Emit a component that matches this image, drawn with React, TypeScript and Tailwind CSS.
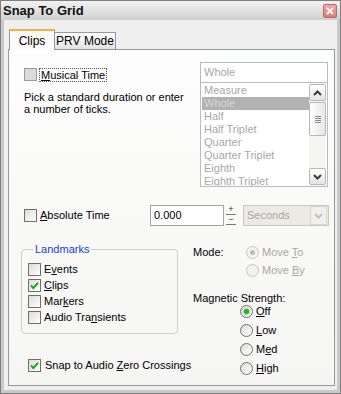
import React from 'react';

function CheckBox({ checked = false, dim = false }: { checked?: boolean; dim?: boolean }) {
  return (
    <span
      className={
        'w-[13px] h-[13px] shrink-0 border flex items-center justify-center ' +
        (dim ? 'border-[#9c9c9c] bg-[#dadada]' : 'border-[#6f6f6f] bg-linear-to-br from-[#dcdcd6] to-white')
      }
    >
      {checked && (
        <svg width="11" height="11" viewBox="0 0 11 11">
          <path d="M2 5.5 L4.4 8 L9 2.8" fill="none" stroke="#21a121" strokeWidth="2" />
        </svg>
      )}
    </span>
  );
}

function Radio({ checked = false, disabled = false }: { checked?: boolean; disabled?: boolean }) {
  return (
    <span
      className={
        'w-[13px] h-[13px] shrink-0 rounded-full border flex items-center justify-center ' +
        (disabled ? 'border-[#c9c7ba] bg-[#f2f2f0]' : 'border-[#6f6f6f] bg-linear-to-br from-[#dcdcd6] to-white')
      }
    >
      {checked && (
        <span
          className={
            'w-[5px] h-[5px] rounded-full ' + (disabled ? 'bg-[#bdbdb5]' : 'bg-[#2cae2c] shadow-[0_0_1px_1px_#9be29b]')
          }
        />
      )}
    </span>
  );
}

const ITEMS = ['Measure', 'Whole', 'Half', 'Half Triplet', 'Quarter', 'Quarter Triplet', 'Eighth', 'Eighth Triplet'];

function ScrollBtn({ up }: { up?: boolean }) {
  return (
    <div className="h-[17px] w-[17px] border border-[#b8b8b8] rounded-[2px] bg-linear-to-b from-white to-[#e4e4e4] flex items-center justify-center">
      <svg width="9" height="6" viewBox="0 0 9 6">
        <path d={up ? 'M1 5 L4.5 1.5 L8 5' : 'M1 1 L4.5 4.5 L8 1'} fill="none" stroke="#3c3c3c" strokeWidth="2" />
      </svg>
    </div>
  );
}

export default function App() {
  return (
    <div
      className="w-[341px] h-[394px] flex flex-col border border-[#7e7e7e] bg-[#e6e6e6] text-[11px] text-black overflow-hidden"
      style={{ fontFamily: '"Liberation Sans", Arial, sans-serif' }}
    >
      {/* title bar */}
      <div className="h-[19px] shrink-0 flex items-center justify-between pl-[2px] pr-[3px] bg-linear-to-b from-[#f2f2f2] to-[#d0d0d0]">
        <span className="font-bold text-[13px] text-[#111]">Snap To Grid</span>
        <span className="w-[14px] h-[14px] rounded-[2px] border border-[#b46b6b] bg-linear-to-b from-[#f4a9a3] to-[#de7a72] flex items-center justify-center">
          <svg width="8" height="8" viewBox="0 0 8 8">
            <path d="M1 1 L7 7 M7 1 L1 7" stroke="white" strokeWidth="2" />
          </svg>
        </span>
      </div>

      {/* body */}
      <div className="flex-1 flex flex-col border-x-[3px] border-b-[3px] border-[#c9c9c9] bg-[#eeeeee] pl-[4px] pr-[2px] pt-[8px] pb-[4px]">
        {/* tabs */}
        <div className="flex items-end pl-[1px] h-[21px] shrink-0">
          <div className="relative z-10 -mb-px w-[46px] h-[21px] bg-[#fbfbfb] border-x border-[#919b9c] border-t-[2px] border-t-[#f0b23a] flex items-center justify-center">
            <span className="text-[12px]">Clips</span>
          </div>
          <div className="w-[61px] h-[17px] border border-l-0 border-b-0 border-[#919b9c] bg-linear-to-b from-white to-[#e2e2e2] flex items-center justify-center">
            <span className="text-[12px]">PRV Mode</span>
          </div>
        </div>

        {/* panel */}
        <div className="flex-1 border border-[#919b9c] bg-linear-to-b from-[#fdfdfd] to-[#f5f5f3] flex flex-col">
          {/* top row */}
          <div className="flex">
            <div className="pl-[15px] pt-[18px]">
              <div className="flex items-center h-[13px]">
                <CheckBox dim />
                <span className="ml-[2px] px-[1px] border border-dotted border-[#555] leading-[12px]">
                  <span className="underline">M</span>usical Time
                </span>
              </div>
              <div className="mt-[10px] leading-[12px] w-[170px]">
                Pick a standard duration or enter
                <br />a number of ticks.
              </div>
            </div>
            <div className="ml-auto mr-[6px] mt-[12px] w-[128px]">
              <div className="h-[21px] border border-[#b9bcbc] bg-white flex items-center pl-[3px] text-[#a7a6aa]">
                Whole
              </div>
              <div className="h-[104px] border border-[#b9bcbc] border-t-0 bg-white flex overflow-hidden">
                <div className="flex-1 pt-[1px] pl-[1px] text-[#a7a6aa]">
                  {ITEMS.map((it, i) => (
                    <div
                      key={it}
                      className={'h-[13px] leading-[13px] pl-[2px] ' + (i === 1 ? 'bg-[#b2b2b2] text-[#d6d6d6]' : '')}
                    >
                      {it}
                    </div>
                  ))}
                </div>
                <div className="w-[17px] mr-[1px] flex flex-col bg-[#f5f5f1] py-[1px]">
                  <ScrollBtn up />
                  <div className="flex-1 pt-[1px]">
                    <div className="h-[34px] border border-[#b8b8b8] rounded-[2px] bg-linear-to-r from-white to-[#e6e6e6] flex flex-col items-center justify-center gap-[1px]">
                      <span className="w-[6px] h-px bg-[#8c8c8c]" />
                      <span className="w-[6px] h-px bg-[#8c8c8c]" />
                      <span className="w-[6px] h-px bg-[#8c8c8c]" />
                      <span className="w-[6px] h-px bg-[#8c8c8c]" />
                    </div>
                  </div>
                  <ScrollBtn />
                </div>
              </div>
            </div>
          </div>

          {/* absolute time row */}
          <div className="mt-[18px] h-[21px] flex items-center pl-[15px]">
            <div className="w-[126px] flex items-center">
              <CheckBox />
              <span className="ml-[3px]">
                <span className="underline">A</span>bsolute Time
              </span>
            </div>
            <div className="w-[74px] h-[21px] border border-[#9da3a6] bg-white flex items-center pl-[3px]">0.000</div>
            <div className="ml-[2px] w-[10px] h-[21px] flex flex-col text-[9px] leading-[9px] text-[#333]">
              <div className="h-[10px] border-b border-[#777] flex items-center justify-center">+</div>
              <div className="h-[10px] border-b border-[#777] flex items-center justify-center">−</div>
            </div>
            <div className="ml-[7px] w-[86px] h-[21px] border border-[#c9c9c2] bg-[#ebebe4] flex items-center">
              <span className="flex-1 pl-[3px] text-[#a7a6aa]">Seconds</span>
              <span className="w-[17px] h-[19px] mr-px border border-[#d8d8d0] bg-[#f0f0ea] flex items-center justify-center">
                <svg width="9" height="6" viewBox="0 0 9 6">
                  <path d="M1 1 L4.5 4.5 L8 1" fill="none" stroke="#c4c4bc" strokeWidth="2" />
                </svg>
              </span>
            </div>
          </div>

          {/* bottom area */}
          <div className="mt-[17px] flex">
            <div className="pl-[12px] w-[170px]">
              <fieldset className="w-[157px] h-[91px] border border-[#d0d0bf] rounded-[4px] pl-[6px] pt-[5px]">
                <legend className="ml-[5px] px-[2px] text-[#1540c8] leading-[13px]">Landmarks</legend>
                {[
                  { pre: 'E', u: 'v', post: 'ents', c: false },
                  { pre: '', u: 'C', post: 'lips', c: true },
                  { pre: 'Mar', u: 'k', post: 'ers', c: false },
                  { pre: 'Audio Tra', u: 'n', post: 'sients', c: false },
                ].map((r) => (
                  <div key={r.pre + r.post} className="h-[16px] flex items-center">
                    <CheckBox checked={r.c} />
                    <span className="ml-[3px]">
                      {r.pre}
                      <span className="underline">{r.u}</span>
                      {r.post}
                    </span>
                  </div>
                ))}
              </fieldset>
              <div className="mt-[23px] ml-[7px] h-[16px] flex items-center whitespace-nowrap">
                <CheckBox checked />
                <span className="ml-[4px]">
                  Snap to Audio <span className="underline">Z</span>ero Crossings
                </span>
              </div>
            </div>

            <div className="ml-[14px] flex flex-col">
              <div className="h-[18px] flex items-center">
                <span className="w-[53px]">Mode:</span>
                <Radio checked disabled />
                <span className="ml-[3px] text-[#aca899]">
                  Move <span className="underline">T</span>o
                </span>
              </div>
              <div className="h-[18px] flex items-center pl-[53px]">
                <Radio disabled />
                <span className="ml-[3px] text-[#aca899]">
                  Move <span className="underline">B</span>y
                </span>
              </div>
              <div className="mt-[13px] h-[13px] leading-[13px]">Magnetic Strength:</div>
              <div className="-mt-[3px] pl-[47px]">
                {[
                  { pre: '', u: 'O', post: 'ff', c: true },
                  { pre: '', u: 'L', post: 'ow', c: false },
                  { pre: 'M', u: 'e', post: 'd', c: false },
                  { pre: '', u: 'H', post: 'igh', c: false },
                ].map((r) => (
                  <div key={r.u} className="h-[19px] flex items-center">
                    <Radio checked={r.c} />
                    <span className="ml-[3px]">
                      {r.pre}
                      <span className="underline">{r.u}</span>
                      {r.post}
                    </span>
                  </div>
                ))}
              </div>
            </div>
          </div>
        </div>
      </div>
    </div>
  );
}
